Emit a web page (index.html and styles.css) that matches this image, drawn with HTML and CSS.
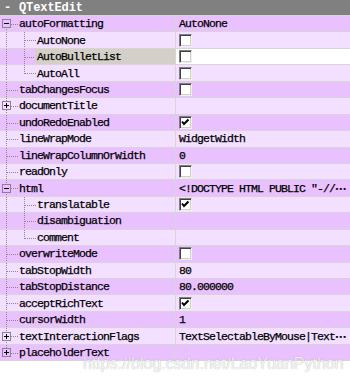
FILE: index.html
```html
<!DOCTYPE html>
<html lang="en">
<head>
  <meta charset="UTF-8">
  <title>QTextEdit properties</title>
  <link rel="stylesheet" href="styles.css">
</head>
<body>
  <div class="editor">
    <div class="head"><span class="toggle">-</span><span class="title">QTextEdit</span></div>

    <div class="row dark">
      <div class="name"><span class="branch first"><span class="box"></span></span><span class="label">autoFormatting</span></div>
      <div class="value">AutoNone</div>
    </div>
    <div class="row">
      <div class="name"><span class="pipe"></span><span class="tee"></span><span class="label">AutoNone</span></div>
      <div class="value"><span class="check"></span></div>
    </div>
    <div class="row dark sel">
      <div class="name"><span class="pipe"></span><span class="tee"></span><span class="label">AutoBulletList</span></div>
      <div class="value"><span class="check"></span></div>
    </div>
    <div class="row">
      <div class="name"><span class="pipe"></span><span class="elbow"></span><span class="label">AutoAll</span></div>
      <div class="value"><span class="check"></span></div>
    </div>
    <div class="row dark">
      <div class="name"><span class="tee"></span><span class="label">tabChangesFocus</span></div>
      <div class="value"><span class="check"></span></div>
    </div>
    <div class="row">
      <div class="name"><span class="branch"><span class="box plus"></span></span><span class="label">documentTitle</span></div>
      <div class="value"></div>
    </div>
    <div class="row dark">
      <div class="name"><span class="tee"></span><span class="label">undoRedoEnabled</span></div>
      <div class="value"><span class="check on"></span></div>
    </div>
    <div class="row">
      <div class="name"><span class="tee"></span><span class="label">lineWrapMode</span></div>
      <div class="value">WidgetWidth</div>
    </div>
    <div class="row dark">
      <div class="name"><span class="tee"></span><span class="label">lineWrapColumnOrWidth</span></div>
      <div class="value">0</div>
    </div>
    <div class="row">
      <div class="name"><span class="tee"></span><span class="label">readOnly</span></div>
      <div class="value"><span class="check"></span></div>
    </div>
    <div class="row dark">
      <div class="name"><span class="branch"><span class="box"></span></span><span class="label">html</span></div>
      <div class="value">&lt;!DOCTYPE HTML PUBLIC "-//<span class="ell">…</span></div>
    </div>
    <div class="row">
      <div class="name"><span class="pipe"></span><span class="tee"></span><span class="label">translatable</span></div>
      <div class="value"><span class="check on"></span></div>
    </div>
    <div class="row dark">
      <div class="name"><span class="pipe"></span><span class="tee"></span><span class="label">disambiguation</span></div>
      <div class="value"></div>
    </div>
    <div class="row">
      <div class="name"><span class="pipe"></span><span class="elbow"></span><span class="label">comment</span></div>
      <div class="value"></div>
    </div>
    <div class="row dark">
      <div class="name"><span class="tee"></span><span class="label">overwriteMode</span></div>
      <div class="value"><span class="check"></span></div>
    </div>
    <div class="row">
      <div class="name"><span class="tee"></span><span class="label">tabStopWidth</span></div>
      <div class="value">80</div>
    </div>
    <div class="row dark">
      <div class="name"><span class="tee"></span><span class="label">tabStopDistance</span></div>
      <div class="value">80.000000</div>
    </div>
    <div class="row">
      <div class="name"><span class="tee"></span><span class="label">acceptRichText</span></div>
      <div class="value"><span class="check on"></span></div>
    </div>
    <div class="row dark">
      <div class="name"><span class="tee"></span><span class="label">cursorWidth</span></div>
      <div class="value">1</div>
    </div>
    <div class="row">
      <div class="name"><span class="branch"><span class="box plus"></span></span><span class="label">textInteractionFlags</span></div>
      <div class="value">TextSelectableByMouse|Text<span class="ell">…</span></div>
    </div>
    <div class="row dark">
      <div class="name"><span class="branch last"><span class="box plus"></span></span><span class="label">placeholderText</span></div>
      <div class="value"></div>
    </div>
  </div>

  <div class="watermark">https://blog.csdn.net/LaoYuanPython</div>
</body>
</html>
```

FILE: styles.css
```css
body {
  margin: 0;
  background: #fff;
  width: 350px;
  height: 384px;
  overflow: hidden;
}

.editor {
  --dv: repeating-linear-gradient(#8a8a8a 0 1px, transparent 1px 2px);
  --dh: repeating-linear-gradient(90deg, #8a8a8a 0 1px, transparent 1px 2px);
  font: 11.5px "Liberation Mono", monospace;
  letter-spacing: -0.9px;
  -webkit-text-stroke: 0.25px #000;
  color: #000;
}

.head {
  display: flex;
  align-items: center;
  height: 15px;
  background: #808080;
  border-bottom: 1px solid #d8d4d8;
  color: #fff;
  -webkit-text-stroke: 0;
  font-weight: bold;
  font-size: 12px;
}

.toggle {
  width: 19px;
  padding-left: 4px;
  box-sizing: border-box;
}

.title {
  letter-spacing: -0.1px;
}

.row {
  --bg: #f3dfff;
  display: flex;
  height: 16.45px;
  box-sizing: border-box;
  border-bottom: 1px solid #d8d4d8;
  background: var(--bg);
}

.row.dark {
  --bg: #eac1ff;
}

.name {
  display: flex;
  width: 175px;
  flex-shrink: 0;
  border-right: 1px solid #d8d4d8;
}

.pipe, .tee, .elbow, .branch {
  display: flex;
  align-items: center;
  width: 18px;
  flex-shrink: 0;
}

.pipe {
  background: var(--dv) 6px 0 / 1px 100% no-repeat;
}

.tee {
  background:
    var(--dv) 6px 0 / 1px 100% no-repeat,
    var(--dh) 7px 8px / 11px 1px no-repeat;
}

.elbow {
  background:
    var(--dv) 6px 0 / 1px 9px no-repeat,
    var(--dh) 7px 8px / 11px 1px no-repeat;
}

.branch {
  background:
    var(--dv) 6px 0 / 1px 4px no-repeat,
    var(--dv) 6px 100% / 1px 4px no-repeat,
    var(--dh) 11px 8px / 7px 1px no-repeat;
}

.branch.first {
  background:
    var(--dv) 6px 100% / 1px 4px no-repeat,
    var(--dh) 11px 8px / 7px 1px no-repeat;
}

.branch.last {
  background:
    var(--dv) 6px 0 / 1px 4px no-repeat,
    var(--dh) 11px 8px / 7px 1px no-repeat;
}

.box {
  width: 9px;
  height: 9px;
  margin-left: 2px;
  box-sizing: border-box;
  border: 1px solid #8c8096;
  background: linear-gradient(#000, #000) center / 5px 1px no-repeat, var(--bg);
}

.box.plus {
  background:
    linear-gradient(#000, #000) center / 5px 1px no-repeat,
    linear-gradient(#000, #000) center / 1px 5px no-repeat,
    var(--bg);
}

.label {
  flex: 1;
  display: flex;
  align-items: center;
  padding-left: 1px;
  white-space: nowrap;
}

.sel .label {
  background: #d4d0c8;
  padding-left: 2px;
  margin-left: -1px;
}

.value {
  flex: 1;
  display: flex;
  align-items: center;
  padding-left: 3px;
  white-space: nowrap;
  overflow: hidden;
}

.sel .value {
  background: #fff;
}

.ell {
  font-family: "Noto Sans CJK SC", sans-serif;
  font-weight: bold;
  letter-spacing: 0;
}

.check {
  width: 13px;
  height: 13px;
  box-sizing: border-box;
  border: 1px solid;
  border-color: #808080 #f0f0f0 #f0f0f0 #808080;
  box-shadow: inset 1px 1px #404040, inset -1px -1px #d4d0c8;
  background: #fff;
}

.check.on {
  background: #fff url("data:image/svg+xml;utf8,<svg xmlns='http://www.w3.org/2000/svg' width='11' height='11'><path d='M2 4.5 L4 7 L8.5 2.5' fill='none' stroke='black' stroke-width='2'/></svg>") center / 11px 11px no-repeat;
}

.watermark {
  position: absolute;
  left: 83px;
  top: 355px;
  font: 16px "Liberation Sans", Arial, sans-serif;
  color: rgba(255, 255, 255, 0.85);
  text-shadow: 0 0 1px rgba(0, 0, 0, 0.35);
  white-space: nowrap;
}
```
